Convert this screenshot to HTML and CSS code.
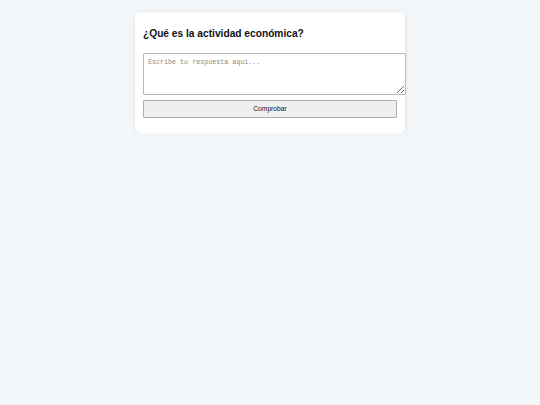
FILE: index.html
```html
<!DOCTYPE html>
<html lang="es">
<head>
<meta charset="utf-8">
<title>Actividad económica</title>
<link rel="stylesheet" href="styles.css">
</head>
<body>
<main class="page">
  <section class="card">
    <h2 class="question">¿Qué es la actividad económica?</h2>
    <textarea class="answer" placeholder="Escribe tu respuesta aquí..."></textarea>
    <button class="check" type="button">Comprobar</button>
  </section>
</main>
</body>
</html>
```
FILE: styles.css
```css
html, body {
  margin: 0;
  padding: 0;
  background: #f4f7fa;
  font-family: "Liberation Sans", Arial, sans-serif;
}
.page {
  display: flex;
  justify-content: center;
  padding-top: 12px;
}
.card {
  width: 254px;
  padding: 8px 8px 15px;
  background: #ffffff;
  border-radius: 5px;
  box-shadow: 0 1px 5px rgba(0, 0, 0, 0.1);
}
.question {
  margin: 8px 0 13px;
  font-size: 10.2px;
  line-height: 11.5px;
  font-weight: bold;
  color: #111;
}
.answer {
  display: block;
  box-sizing: border-box;
  width: 263px;
  height: 42px;
  margin: 0;
  padding: 4px;
  border: 1px solid #b8b8b8;
  border-radius: 1px;
  font-family: "Liberation Mono", monospace;
  font-size: 6.7px;
  line-height: 8px;
  color: #333;
  background: #fff;
  resize: vertical;
}
.answer::placeholder {
  color: #8a8a8a;
}
.check {
  display: block;
  width: 100%;
  height: 18px;
  margin: 5px 0 0;
  padding: 0;
  border: 1px solid #b0b0b0;
  border-radius: 1px;
  background: #efefef;
  font-family: "Liberation Sans", Arial, sans-serif;
  font-size: 6.7px;
  color: #111;
}
```
